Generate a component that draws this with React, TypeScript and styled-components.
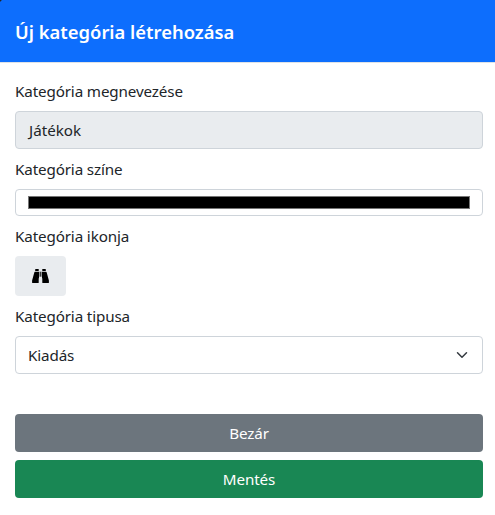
import React from 'react';
import styled, { createGlobalStyle } from 'styled-components';

const Global = createGlobalStyle`
  *, *::before, *::after { box-sizing: border-box; }
  body { margin: 0; background: #fff; font-family: "Noto Sans", "Open Sans", sans-serif; font-size: 15.2px; line-height: 24px; letter-spacing: -0.13px; color: #212529; }
`;
const Dialog = styled.div`width: 100%; height: 515px; overflow: hidden; background: #fff;`;
const Header = styled.header`
  height: 63px; padding: 2px 15px 0; display: flex; align-items: center;
  background: radial-gradient(circle at 0 0, #212529 1px, #0d6efd 2px); background-clip: padding-box;
  color: #fff; border-bottom: 1px solid #dee2e6;
`;
const Title = styled.h5`margin: 0; font-size: 18.4px; font-weight: 600; line-height: 30px; letter-spacing: 0; white-space: nowrap;`;
const Form = styled.form`padding: 16px 12px 0 15px; display: flex; flex-direction: column;`;
const Label = styled.label`display: block; height: 24px; margin-bottom: 8px; white-space: nowrap;`;
const Field = styled.div<{ $filled?: boolean }>`
  height: 38px; padding: 0 12px; margin-bottom: 8px; display: flex; align-items: center; justify-content: space-between;
  border: 1px solid #ced4da; border-radius: 4px; background: ${p => (p.$filled ? '#e9ecef' : '#fff')};
  ${p => p.$filled && 'padding-left: 13px; letter-spacing: 0;'}
`;
const ColorField = styled.div`height: 27px; padding: 6px 12px; margin-bottom: 8px; border: 1px solid #ced4da; border-radius: 4px;`;
const Swatch = styled.div`height: 13px; background: #000; border: 1px solid #767676;`;
const IconButton = styled.button`
  width: 51px; height: 40px; margin: 0 0 8px; padding: 0; border: 0; border-radius: 4px; background: #e9ecef;
  display: flex; align-items: center; justify-content: center;
`;
const Footer = styled.footer`padding: 32px 12px 0 15px; display: flex; flex-direction: column; gap: 8px;`;
const Button = styled.button<{ $color: string }>`
  height: 38px; padding: 0; border: 0; border-radius: 4px; background: ${p => p.$color}; color: #fff; font: inherit; letter-spacing: inherit;
`;

export default function App() {
  return (
    <Dialog>
      <Global />
      <Header><Title>Új kategória létrehozása</Title></Header>
      <Form>
        <Label>Kategória megnevezése</Label>
        <Field $filled>Játékok</Field>
        <Label>Kategória színe</Label>
        <ColorField><Swatch /></ColorField>
        <Label>Kategória ikonja</Label>
        <IconButton type="button" aria-label="Ikon">
          <svg width="17" height="14" viewBox="0 0 17 14">
            <path d="M3.5 0h3.2v2H3.2V.4Q3.2 0 3.5 0ZM10.300 0h3.200q.300 0 .300.400V2h-3.500ZM3 2.700h4V9l-.3.500v4q0 .500-.500.500H.700Q.100 14 .100 13.400V11.500L2.300 3.500Q2.500 2.700 3 2.700ZM10 2.700h4q.500 0 .700.800L16.900 11.500v1.900q0 .600-.600.600h-5.500q-.500 0-.500-.500v-4L10 9Z" />
            <path d="M7.500 2.700h2v5h-2Z" fillOpacity=".75" />
          </svg>
        </IconButton>
        <Label>Kategória tipusa</Label>
        <Field>Kiadás
          <svg width="16" height="12" viewBox="0 0 16 16"><path d="m2 5 6 6 6-6" fill="none" stroke="#343a40" strokeWidth="2" strokeLinecap="round" strokeLinejoin="round" /></svg>
        </Field>
      </Form>
      <Footer>
        <Button $color="#6c757d">Bezár</Button>
        <Button $color="#198754">Mentés</Button>
      </Footer>
    </Dialog>
  );
}
